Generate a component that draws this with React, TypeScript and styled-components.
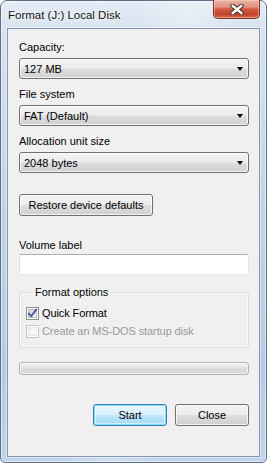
import React from "react";
import styled, { createGlobalStyle } from "styled-components";

const Global = createGlobalStyle`
  html, body { margin: 0; padding: 0; background: #ffffff; }
  body { font-family: "Liberation Sans", Arial, sans-serif; }
  * { box-sizing: border-box; }
`;

const Window = styled.div`
  width: 267px;
  height: 463px;
  border: 1px solid #5d6f86;
  border-radius: 7px 7px 5px 5px;
  padding: 0 6px 5px 6px;
  display: flex;
  flex-direction: column;
  background:
    linear-gradient(100deg, rgba(255,255,255,0) 0%, rgba(255,255,255,0) 40%, rgba(255,255,255,0.25) 55%, rgba(255,255,255,0) 70%),
    linear-gradient(180deg, #e4ecf5 0%, #d5e1ee 8%, #c2d4e9 45%, #b5cbe5 80%, #c0d4eb 100%);
  box-shadow: inset 0 0 0 1px rgba(255, 255, 255, 0.55);
`;

const TitleBar = styled.div`
  height: 27px;
  display: flex;
  align-items: flex-start;
  justify-content: space-between;
`;

const Title = styled.div`
  font-size: 11.5px;
  line-height: 14px;
  color: #111;
  margin-top: 7px;
  padding-left: 1px;
  text-shadow: 0 0 6px rgba(255,255,255,0.95), 0 0 2px rgba(255,255,255,0.9);
`;

const CloseBtn = styled.div`
  width: 47px;
  height: 19px;
  margin-top: -1px;
  border: 1px solid #7d3226;
  border-top: none;
  border-radius: 0 0 5px 5px;
  background: linear-gradient(180deg, #eab3a6 0%, #e0907e 40%, #cf5a43 50%, #c3422a 80%, #d36b52 100%);
  box-shadow: inset 0 0 0 1px rgba(255, 220, 210, 0.45);
  display: flex;
  align-items: center;
  justify-content: center;
`;

const Client = styled.div`
  flex: 1;
  border: 1px solid #8797ab;
  background: #f0f0f0;
  box-shadow: 0 0 0 1px rgba(255,255,255,0.45);
  padding: 11px 10px 0 11px;
  display: flex;
  flex-direction: column;
  font-size: 11px;
  color: #000;
`;

const Label = styled.div<{ $mt?: number; $mb?: number }>`
  height: 14px;
  line-height: 14px;
  font-size: 11px;
  margin-top: ${(p) => p.$mt ?? 0}px;
  margin-bottom: ${(p) => p.$mb ?? 4}px;
`;

const Combo = styled.div`
  height: 21px;
  border: 1px solid #707070;
  border-radius: 3px;
  background: linear-gradient(180deg, #f3f3f3 0%, #ececec 48%, #dedede 52%, #d0d0d0 100%);
  box-shadow: inset 0 0 0 1px rgba(255,255,255,0.75);
  display: flex;
  align-items: center;
  justify-content: space-between;
  padding: 0 4px 0 4px;
  line-height: 14px;
`;

const Arrow = styled.div`
  width: 0;
  height: 0;
  border-left: 3.5px solid transparent;
  border-right: 3.5px solid transparent;
  border-top: 4px solid #000;
  margin-right: 1px;
`;

const Button = styled.div<{ $w: number; $default?: boolean; $mt?: number }>`
  width: ${(p) => p.$w}px;
  height: 22px;
  margin-top: ${(p) => p.$mt ?? 0}px;
  border: 1px solid ${(p) => (p.$default ? "#3c7fb1" : "#707070")};
  border-radius: 3px;
  background: ${(p) =>
    p.$default
      ? "linear-gradient(180deg, #eaf6fd 0%, #d9f0fc 48%, #bee6fd 52%, #a7d9f5 100%)"
      : "linear-gradient(180deg, #f3f3f3 0%, #ececec 48%, #dedede 52%, #d0d0d0 100%)"};
  box-shadow: ${(p) =>
    p.$default
      ? "inset 0 0 0 1px #7fdcf8, inset 0 0 0 2px rgba(255,255,255,0.5)"
      : "inset 0 0 0 1px rgba(255,255,255,0.75)"};
  display: flex;
  align-items: center;
  justify-content: center;
  line-height: 14px;
`;

const TextInput = styled.div`
  height: 21px;
  background: #ffffff;
  border: 1px solid #e2e3ea;
  border-top-color: #abadb3;
  border-bottom-color: #e3e9ef;
  border-radius: 2px;
`;

const Group = styled.fieldset`
  margin: 10px 0 0 0;
  padding: 8px 0 9px 6px;
  border: 1px solid #d5dfe5;
  border-radius: 3px;
  box-shadow: inset 0 0 0 1px rgba(255,255,255,0.8);
  display: flex;
  flex-direction: column;
  gap: 5px;
  min-width: 0;
`;

const Legend = styled.legend`
  margin-left: 7px;
  padding: 0 2px;
  line-height: 14px;
  font-size: 11px;
`;

const CheckRow = styled.div<{ $disabled?: boolean }>`
  height: 13px;
  display: flex;
  align-items: center;
  gap: 3px;
  line-height: 13px;
  letter-spacing: -0.1px;
  color: ${(p) => (p.$disabled ? "#9a9a9a" : "#000")};
`;

const Progress = styled.div`
  margin-top: 14px;
  height: 13px;
  border: 1px solid #b2b2b2;
  border-radius: 3px;
  background: linear-gradient(180deg, #f3f3f3 0%, #e4e4e4 40%, #d8d8d8 60%, #dedede 100%);
  box-shadow: inset 0 0 0 1px rgba(255,255,255,0.6);
`;

const ButtonRow = styled.div`
  margin-top: 29px;
  display: flex;
  justify-content: flex-end;
  gap: 8px;
`;

const CheckBox: React.FC<{ checked?: boolean; disabled?: boolean }> = ({ checked, disabled }) => (
  <svg width="13" height="13" viewBox="0 0 13 13">
    <defs>
      <linearGradient id={disabled ? "cbd" : "cbe"} x1="0" y1="0" x2="1" y2="1">
        <stop offset="0" stopColor={disabled ? "#f1f1f1" : "#cbcfd5"} />
        <stop offset="1" stopColor={disabled ? "#f8f8f8" : "#f6f6f6"} />
      </linearGradient>
    </defs>
    <rect x="0.5" y="0.5" width="12" height="12" fill="#fff" stroke={disabled ? "#c6c6c6" : "#8e8f8f"} />
    <rect x="2.5" y="2.5" width="8" height="8" fill={`url(#${disabled ? "cbd" : "cbe"})`} stroke={disabled ? "#e6e6e6" : "#b9bcc2"} strokeWidth="1" />
    {checked && (
      <path d="M2.8 6.6 L5.2 9.2 L10.2 2.6" fill="none" stroke="#4a5f97" strokeWidth="1.9" strokeLinecap="round" strokeLinejoin="round" />
    )}
  </svg>
);

const CloseGlyph = () => (
  <svg width="14" height="11" viewBox="0 0 14 11">
    <path d="M2.5 1.8 L11.5 9.2 M11.5 1.8 L2.5 9.2" stroke="#3b2b2b" strokeWidth="4.4" strokeLinecap="round" />
    <path d="M2.5 1.8 L11.5 9.2 M11.5 1.8 L2.5 9.2" stroke="#ffffff" strokeWidth="2.4" strokeLinecap="round" />
  </svg>
);

const ComboBox: React.FC<{ value: string }> = ({ value }) => (
  <Combo>
    <span>{value}</span>
    <Arrow />
  </Combo>
);

export default function App() {
  return (
    <>
      <Global />
      <Window>
        <TitleBar>
          <Title>Format (J:) Local Disk</Title>
          <CloseBtn>
            <CloseGlyph />
          </CloseBtn>
        </TitleBar>
        <Client>
          <Label>Capacity:</Label>
          <ComboBox value="127 MB" />
          <Label $mt={8}>File system</Label>
          <ComboBox value="FAT (Default)" />
          <Label $mt={8}>Allocation unit size</Label>
          <ComboBox value="2048 bytes" />
          <Button $w={134} $mt={21}>Restore device defaults</Button>
          <Label $mt={22} $mb={2}>Volume label</Label>
          <TextInput />
          <Group>
            <Legend>Format options</Legend>
            <CheckRow>
              <CheckBox checked />
              <span>Quick Format</span>
            </CheckRow>
            <CheckRow $disabled>
              <CheckBox disabled />
              <span>Create an MS-DOS startup disk</span>
            </CheckRow>
          </Group>
          <Progress />
          <ButtonRow>
            <Button $w={74} $default>Start</Button>
            <Button $w={74}>Close</Button>
          </ButtonRow>
        </Client>
      </Window>
    </>
  );
}
